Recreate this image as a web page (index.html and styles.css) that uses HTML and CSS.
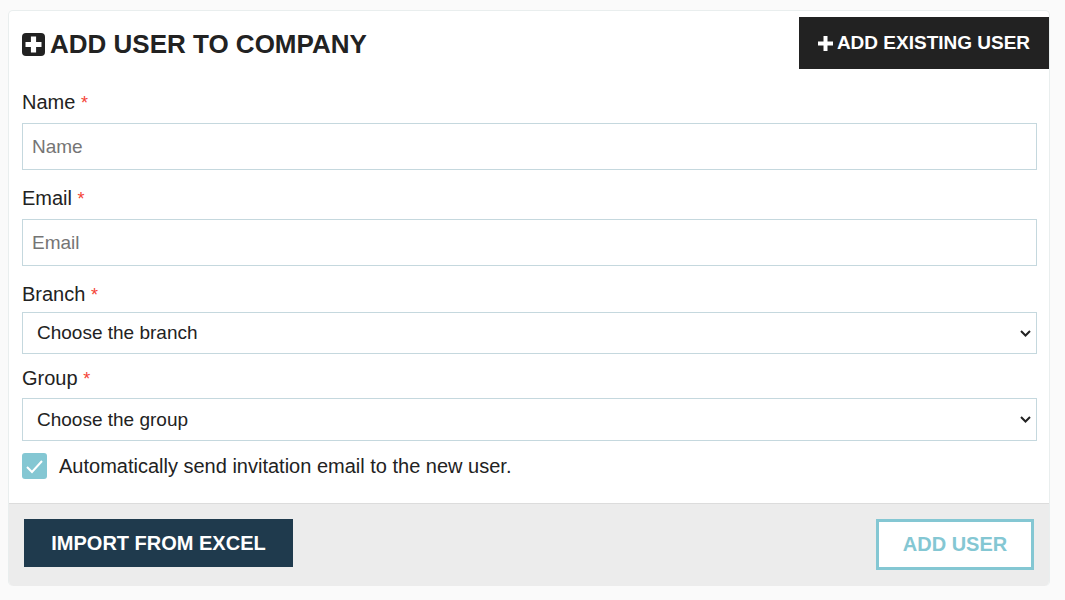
FILE: index.html
```html
<!DOCTYPE html>
<html lang="en">
<head>
    <meta charset="UTF-8">
    <meta name="viewport" content="width=device-width, initial-scale=1.0">
    <title>Add User To Company</title>
    <link rel="stylesheet" href="styles.css">
</head>
<body>
    <div class="card">
        <div class="card-header">
            <h2 class="title">
                <svg class="title-icon" width="23" height="23" viewBox="0 0 23 23">
                    <rect width="23" height="23" rx="4" fill="#222"/>
                    <path d="M8.900 3.500h5.200v5.400h5.400v5.200h-5.400v5.400H8.900v-5.400H3.500V8.900h5.400z" fill="#fff"/>
                </svg>
                ADD USER TO COMPANY
            </h2>
            <a class="btn-existing" href="#">
                <svg width="15" height="15" viewBox="0 0 15 15">
                    <path d="M5.500 0h4v5.500H15v4H9.500V15h-4V9.500H0v-4h5.500z" fill="#fff"/>
                </svg>
                ADD EXISTING USER
            </a>
        </div>
        <form class="card-body">
            <div class="field field-text">
                <label>Name <span class="req">*</span></label>
                <input type="text" placeholder="Name">
            </div>
            <div class="field field-text">
                <label>Email <span class="req">*</span></label>
                <input type="text" placeholder="Email">
            </div>
            <div class="field field-branch">
                <label>Branch <span class="req">*</span></label>
                <select><option>Choose the branch</option></select>
            </div>
            <div class="field field-group">
                <label>Group <span class="req">*</span></label>
                <select><option>Choose the group</option></select>
            </div>
            <div class="check-row">
                <span class="check-box">
                    <svg width="25" height="26" viewBox="0 0 25 26">
                        <path d="M5 14l5 5L20 8" fill="none" stroke="#fff" stroke-width="2"/>
                    </svg>
                </span>
                <span>Automatically send invitation email to the new user.</span>
            </div>
        </form>
        <div class="card-footer">
            <a class="btn-import" href="#">IMPORT FROM EXCEL</a>
            <a class="btn-add" href="#">ADD USER</a>
        </div>
    </div>
</body>
</html>
```

FILE: styles.css
```css
* {
    box-sizing: border-box;
}

body {
    margin: 0;
    padding: 10px 15px 14px 8px;
    background-color: #fafafa;
    font-family: 'Liberation Sans', Arial, sans-serif;
    color: #222;
}

.card {
    background-color: #fff;
    border: 1px solid #e9eeee;
    border-bottom: 0;
    border-radius: 5px;
    overflow: hidden;
}

.card-header {
    display: flex;
    justify-content: space-between;
    align-items: flex-start;
    padding: 6px 0 0 13px;
}

.title {
    display: flex;
    align-items: center;
    gap: 5px;
    margin: 0;
    height: 54px;
    font-size: 26px;
    font-weight: bold;
}

.btn-existing {
    display: flex;
    align-items: center;
    justify-content: center;
    gap: 4px;
    width: 250px;
    height: 52px;
    background-color: #222;
    color: #fff;
    font-size: 19px;
    font-weight: bold;
    text-decoration: none;
}

.card-body {
    padding: 0 12px 0 13px;
}

.field label {
    display: block;
    font-size: 20px;
    line-height: 24px;
}

.field-text {
    padding-top: 19px;
}

.field-text + .field-text {
    padding-top: 16px;
}

.field-text label {
    margin-bottom: 8px;
}

.field-branch {
    padding-top: 16px;
}

.field-branch label {
    margin-bottom: 5px;
}

.field-group {
    padding-top: 12px;
}

.field-group label {
    margin-bottom: 7px;
}

.req {
    color: #f44336;
    font-size: 18px;
}

input,
select {
    display: block;
    width: 100%;
    background-color: #fff;
    border: 1px solid #c5d8de;
    border-radius: 0;
    font-family: inherit;
    font-size: 19px;
    color: #222;
}

input {
    height: 47px;
    padding: 0 9px;
}

input::placeholder {
    color: #757575;
}

select {
    appearance: none;
    height: 42px;
    padding: 0 10px 2px 14px;
    background: #fff url("data:image/svg+xml,%3Csvg xmlns='http://www.w3.org/2000/svg' width='11' height='7'%3E%3Cpath d='M1 1l4.500 4.500L10 1' fill='none' stroke='%23222' stroke-width='2'/%3E%3C/svg%3E") no-repeat right 5px center;
}

.field-group select {
    height: 43px;
    padding-bottom: 0;
}

.check-row {
    display: flex;
    align-items: center;
    gap: 12px;
    margin-top: 12px;
    padding-bottom: 24px;
    font-size: 20px;
}

.check-box {
    display: block;
    width: 25px;
    height: 26px;
    background-color: #84c7d3;
    border-radius: 3px;
}

.check-box svg {
    display: block;
}

.card-footer {
    display: flex;
    justify-content: space-between;
    align-items: flex-start;
    height: 83px;
    padding: 15px 15px 0 15px;
    background-color: #ececec;
    border-top: 1px solid #dcdcdc;
}

.btn-import {
    display: flex;
    align-items: center;
    justify-content: center;
    width: 269px;
    height: 48px;
    background-color: #1f3a4d;
    color: #fff;
    font-size: 20px;
    font-weight: bold;
    text-decoration: none;
}

.btn-add {
    display: flex;
    align-items: center;
    justify-content: center;
    width: 158px;
    height: 51px;
    background-color: #fff;
    border: 3px solid #84c7d3;
    color: #84c7d3;
    font-size: 20px;
    font-weight: bold;
    text-decoration: none;
}
```
